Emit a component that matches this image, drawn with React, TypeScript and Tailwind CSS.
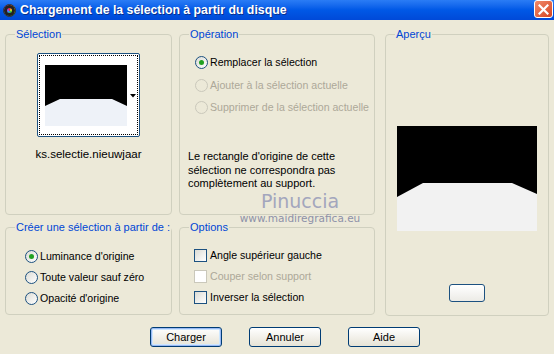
import type { ReactNode } from 'react'

const FONT = { fontFamily: '"Liberation Sans", Arial, sans-serif' }

function Group({ label, className, children }: { label: string; className?: string; children?: ReactNode }) {
  return (
    <div className={`relative rounded-[4px] border border-[#d0d0bf] ${className ?? ''}`}>
      <span className="absolute -top-[8px] left-[9px] whitespace-nowrap bg-[#ece9d8] px-[1px] text-[11px] leading-[14px] text-[#0046d5]">
        {label}
      </span>
      {children}
    </div>
  )
}

function Radio({ checked, disabled, label }: { checked?: boolean; disabled?: boolean; label: string }) {
  return (
    <div className="flex h-[13px] items-center gap-[2px] whitespace-nowrap">
      <span
        className={`flex h-[13px] w-[13px] shrink-0 items-center justify-center rounded-full border ${
          disabled ? 'border-[#cac8bb] bg-transparent' : 'border-[#1c5180] bg-gradient-to-br from-[#dcdcd5] to-white'
        }`}
      >
        {checked && <span className="h-[5px] w-[5px] rounded-full bg-[#21a121]" />}
      </span>
      <span className={`text-[10.6px] leading-[13px] ${disabled ? 'text-[#aca899]' : 'text-black'}`}>{label}</span>
    </div>
  )
}

function Check({ disabled, label }: { disabled?: boolean; label: string }) {
  return (
    <div className="flex h-[13px] items-center gap-[3px] whitespace-nowrap">
      <span
        className={`h-[13px] w-[13px] shrink-0 border ${
          disabled ? 'border-[#cac8bb] bg-white' : 'border-[#1c5180] bg-gradient-to-br from-[#dcdcd5] to-white'
        }`}
      />
      <span className={`text-[10.6px] leading-[13px] ${disabled ? 'text-[#aca899]' : 'text-black'}`}>{label}</span>
    </div>
  )
}

function Button({ label, isDefault }: { label: string; isDefault?: boolean }) {
  return (
    <button
      className={`flex h-[20px] w-[72px] items-center justify-center rounded-[3px] border border-[#003c74] bg-gradient-to-b from-white to-[#e6e3d6] text-[11px] text-black ${
        isDefault ? 'shadow-[inset_0_0_0_1px_#98b8f4,inset_0_0_0_2px_#cee7ff]' : ''
      }`}
    >
      {label}
    </button>
  )
}

export default function App() {
  return (
    <div className="h-[354px] w-[554px] overflow-hidden bg-[#ece9d8]" style={FONT}>
      {/* title bar */}
      <div className="flex h-[20px] items-center bg-gradient-to-b from-[#2a7cf5] via-[#0058e6] to-[#0049d8]">
        <span className="ml-[3px] h-[13px] w-[13px] rounded-full border border-[#333] bg-[conic-gradient(#e33,#fd2,#2c4,#29f,#a3e,#e33)] shadow-[inset_0_0_0_3px_#222]" />
        <span className="ml-[4px] flex-1 whitespace-nowrap text-[12.3px] font-bold text-white [text-shadow:1px_1px_0_#0a2f8c]">
          Chargement de la sélection à partir du disque
        </span>
        <span className="mr-[1px] flex h-[18px] w-[19px] items-center justify-center self-start rounded-[3px] border border-white bg-gradient-to-br from-[#f08a6a] to-[#d6431c]">
          <svg width="11" height="11" viewBox="0 0 11 11">
            <path d="M1.5 1.5 L9.5 9.5 M9.5 1.5 L1.5 9.5" stroke="white" strokeWidth="2.2" strokeLinecap="square" />
          </svg>
        </span>
      </div>

      {/* body */}
      <div className="relative grid grid-cols-[167px_196px_167px] grid-rows-[181px_88px] gap-x-[7px] gap-y-[12px] pl-[5px] pt-[14px]">
        <Group label="Sélection">
          <div className="flex flex-col items-center pt-[18px]">
            <div className="relative h-[84px] w-[103px] rounded-[2px] border border-[#1c5180] bg-white p-[1px]">
              <div className="h-full w-full border border-dotted border-black">
                <svg className="ml-[5px] mt-[9px]" width="82" height="61" viewBox="0 0 82 61">
                  <rect width="82" height="61" fill="#eef2f8" />
                  <polygon points="0,0 82,0 82,41 67,34 15,34 0,41" fill="#000" />
                </svg>
              </div>
              <svg className="absolute right-[3px] top-[40px]" width="6" height="4" viewBox="0 0 6 4">
                <polygon points="0,0 6,0 3,3.5" fill="#000" />
              </svg>
            </div>
            <span className="mt-[10px] text-[11.5px] leading-[14px] text-black">ks.selectie.nieuwjaar</span>
          </div>
        </Group>

        <Group label="Opération">
          <div className="flex flex-col gap-[9.5px] pl-[15px] pt-[21px]">
            <Radio checked label="Remplacer la sélection" />
            <Radio disabled label="Ajouter à la sélection actuelle" />
            <Radio disabled label="Supprimer de la sélection actuelle" />
          </div>
          <p className="mt-[36px] pl-[8px] text-[11px] leading-[13.5px] text-black">
            Le rectangle d'origine de cette
            <br />
            sélection ne correspondra pas
            <br />
            complètement au support.
          </p>
        </Group>

        <Group label="Aperçu" className="row-span-2 ml-[3px] h-[282px]">
          <div className="flex flex-col items-center pt-[91px]">
            <svg width="140" height="105" viewBox="0 0 140 105">
              <rect width="140" height="105" fill="#f2f2f2" />
              <polygon points="0,0 140,0 140,68 115,57 26,57 0,71" fill="#000" />
            </svg>
            <div className="mt-[53px] h-[18px] w-[36px] rounded-[3px] border border-[#1c5180] bg-gradient-to-b from-white to-[#ecebe6]" />
          </div>
        </Group>

        <Group label="Créer une sélection à partir de :">
          <div className="flex flex-col gap-[8px] pl-[19px] pt-[22px]">
            <Radio checked label="Luminance d'origine" />
            <Radio label="Toute valeur sauf zéro" />
            <Radio label="Opacité d'origine" />
          </div>
        </Group>

        <Group label="Options">
          <div className="flex flex-col gap-[8px] pl-[14px] pt-[21px]">
            <Check label="Angle supérieur gauche" />
            <Check disabled label="Couper selon support" />
            <Check label="Inverser la sélection" />
          </div>
        </Group>

        {/* watermark */}
        <div className="pointer-events-none absolute left-[240px] top-[171px] flex w-[120px] flex-col items-center">
          <span className="text-[19px] leading-[20px] text-[#a3a6bd]" style={{ fontFamily: '"DejaVu Sans", sans-serif' }}>
            Pinuccia
          </span>
          <span className="whitespace-nowrap text-[10.5px] leading-[14px] text-[#8e91a8]" style={{ fontFamily: '"DejaVu Sans", sans-serif' }}>
            www.maidiregrafica.eu
          </span>
        </div>
      </div>

      {/* buttons */}
      <div className="mt-[12px] flex gap-[27px] pl-[150px]">
        <Button isDefault label="Charger" />
        <Button label="Annuler" />
        <Button label="Aide" />
      </div>
    </div>
  )
}
